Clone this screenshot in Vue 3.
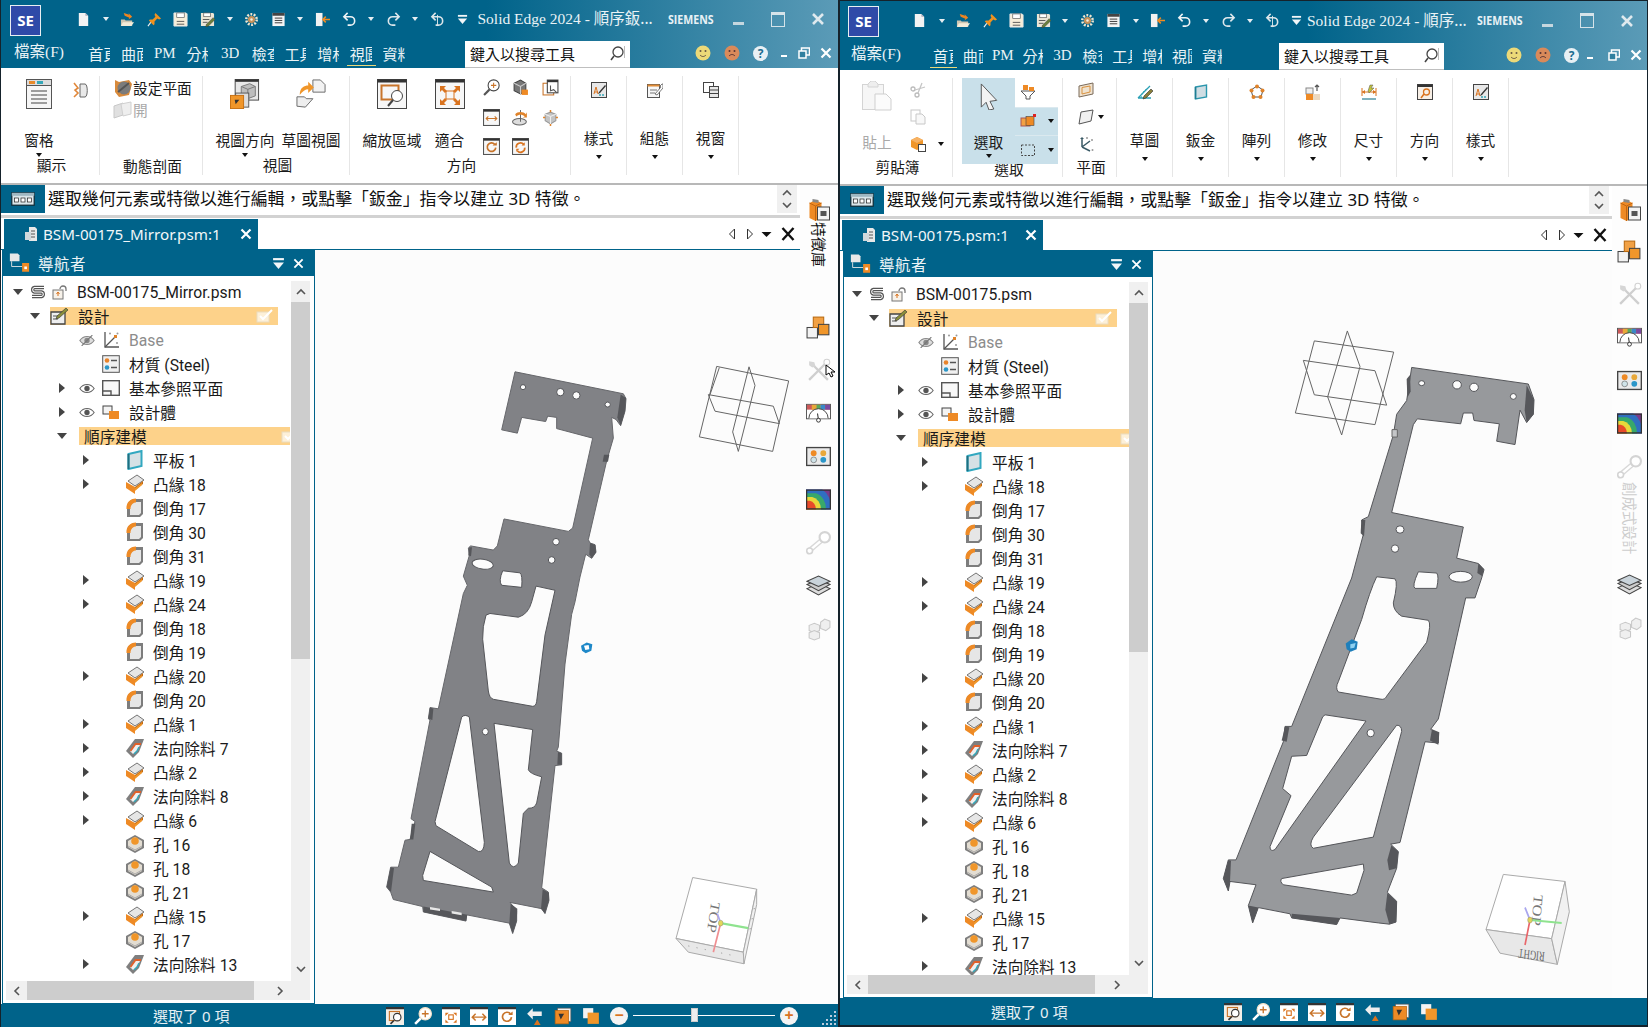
<template>
  <div class="app">
    <!-- icon sprite -->
    <svg class="sprite" aria-hidden="true">
      <symbol id="q-new" viewBox="0 0 16 16"><path d="M3 1h7l3 3v11H3z" fill="#f3f3f3"/><path d="M10 1v3h3z" fill="#aab"/></symbol>
      <symbol id="q-open" viewBox="0 0 16 16"><path d="M1 8h4l1 1h7v6H1z" fill="#cfc6b2"/><path d="M1 15l2-4h12l-3 4z" fill="#f3ecd9"/><path d="M4 1l6 2-1-2 4 4-4 3 1-2-5-2z" fill="#ee8420"/></symbol>
      <symbol id="q-pin" viewBox="0 0 16 16"><path d="M9 1l6 6-2 1-2-1-3 3v3l-1 1-5-5 1-1h3l3-3-1-2z" fill="#f0921f"/><path d="M4 11l-3 4" stroke="#f3f3f3" stroke-width="1.2"/></symbol>
      <symbol id="q-save" viewBox="0 0 16 16"><path d="M1 1h13l1 1v13H1z" fill="#f7eed9" stroke="#e8e8e8"/><rect x="4" y="1" width="8" height="5" fill="#fff" stroke="#555" stroke-width=".7"/><path d="M4 10h8M4 13h8" stroke="#555"/></symbol>
      <symbol id="q-saveas" viewBox="0 0 16 16"><path d="M1 1h13l1 1v13H1z" fill="#ece6d6"/><rect x="4" y="1" width="7" height="4" fill="#fff" stroke="#555" stroke-width=".7"/><path d="M3 8h7M3 11h5" stroke="#555"/><path d="M14 6l2 2-7 7-3 1 1-3z" fill="#6a7f3a" stroke="#333" stroke-width=".5"/></symbol>
      <symbol id="q-gear" viewBox="0 0 16 16"><circle cx="8" cy="8" r="5.6" fill="none" stroke="#f0e6d0" stroke-width="2.6" stroke-dasharray="2 1.5"/><circle cx="8" cy="8" r="3.8" fill="#c8925a"/><circle cx="8" cy="8" r="1.3" fill="#f7efe0"/></symbol>
      <symbol id="q-list" viewBox="0 0 16 16"><rect x="1.5" y="1" width="13" height="14" fill="#f4f4f4"/><rect x="1.5" y="1" width="13" height="3" fill="#444"/><path d="M4 6.5h8M4 9h8M4 11.5h8" stroke="#333"/></symbol>
      <symbol id="q-exit" viewBox="0 0 16 16"><rect x="1" y="1" width="7" height="14" fill="#f2f2f2"/><path d="M16 8H9M11.5 5L8.500 8l3 3" fill="none" stroke="#ef8b22" stroke-width="1.7"/></symbol>
      <symbol id="q-undo" viewBox="0 0 16 16"><path d="M6 1L2 5l4 4M2 5h7a4.500 4.500 0 0 1 0 9H6" fill="none" stroke="#eef3f5" stroke-width="1.7"/></symbol>
      <symbol id="q-redo" viewBox="0 0 16 16"><path d="M10 1l4 4-4 4M14 5H7a4.500 4.500 0 0 0 0 9h3" fill="none" stroke="#dde7ec" stroke-width="1.700"/></symbol>
      <symbol id="q-redo2" viewBox="0 0 16 16"><path d="M6 1L2 5l4 4M2 5h7a4.500 4.500 0 0 1 0 9H6" fill="none" stroke="#dce5e9" stroke-width="1.7"/><path d="M8 3v12" stroke="#dce5e9"/></symbol>
      <symbol id="q-drop" viewBox="0 0 12 12"><rect x="1" y="1" width="10" height="2" fill="#f2f6f8"/><path d="M1 5h10L6 11z" fill="#f2f6f8"/></symbol>

      <symbol id="r-pane" viewBox="0 0 26 30"><rect x=".5" y=".5" width="25" height="29" fill="#f6f6f6" stroke="#555"/><rect x=".5" y=".5" width="25" height="6" fill="#dcdcdc" stroke="#555"/><rect x="3" y="2" width="6" height="3" fill="#e88a2a"/><rect x="11" y="2" width="6" height="3" fill="#35a7b8"/><path d="M5 12h16M5 16h16M5 20h16M5 24h16" stroke="#444"/></symbol>
      <symbol id="r-sect" viewBox="0 0 16 16"><path d="M7 2v13h5c3 0 3-13 0-13z" fill="#e9e9e9" stroke="#666"/><path d="M1 1l4 5-3 2 3 3-4 4" fill="none" stroke="#e0873a" stroke-width="1.600"/></symbol>
      <symbol id="r-setplane" viewBox="0 0 20 20"><path d="M2 2l4 2 10-2 3 4-3 11-10 2-4-5z" fill="#d88a3c"/><circle cx="11" cy="10" r="6.500" fill="#7b7b7b"/><path d="M5 14L16 5" stroke="#555" stroke-width="2"/></symbol>
      <symbol id="r-openplane" viewBox="0 0 20 20"><path d="M1 6l9-3v12l-9 3z" fill="#e0e0e0" stroke="#c8c8c8"/><path d="M8 4l10-2v12l-8 2z" fill="#eee" stroke="#d0d0d0"/></symbol>
      <symbol id="r-orient" viewBox="0 0 32 32"><rect x="5.500" y=".5" width="25" height="22" fill="#e8e8e8" stroke="#444"/><rect x="5.500" y=".5" width="25" height="2.500" fill="#333"/><path d="M12 8l9-3 6 3v10l-8 3-7-3z" fill="#bdbdbd" stroke="#777"/><path d="M12 8l7 3v10M19 11l8-3" fill="none" stroke="#777"/><rect x="6" y="15" width="14" height="15" fill="#ddd" stroke="#555"/><rect x=".5" y="17.500" width="14" height="14" fill="#f0962a" stroke="#c76f10"/><path d="M5 22h5l-4 5z" fill="#333"/></symbol>
      <symbol id="r-sketchview" viewBox="0 0 32 32"><path d="M18 1h8l5 5v8H18z" fill="#f2f2f2" stroke="#666"/><path d="M1 19h8l2 2h7l-8 9-9-1z" fill="#eee" stroke="#666"/><path d="M4 17c0-8 5-10 9-10V3l6 6-6 6v-4c-3 0-6 2-9 6z" fill="#f0962a"/></symbol>
      <symbol id="r-zoomarea" viewBox="0 0 30 30"><rect x=".5" y=".5" width="29" height="29" fill="#f7f7f7" stroke="#444"/><rect x=".5" y=".5" width="29" height="3" fill="#333"/><rect x="4.500" y="6.500" width="17" height="14" fill="none" stroke="#c8742a" stroke-width="2"/><circle cx="20" cy="17" r="5.500" fill="#fff" stroke="#444"/><path d="M16 21l-5 6" stroke="#444" stroke-width="2"/></symbol>
      <symbol id="r-fit" viewBox="0 0 30 30"><rect x=".5" y=".5" width="29" height="29" fill="#f7f7f7" stroke="#444"/><rect x=".5" y=".5" width="29" height="3" fill="#333"/><rect x="11" y="12" width="8" height="8" fill="none" stroke="#d9731f"/><path d="M5 7h6L9 9l3 3-2 2-3-3-2 2zM25 7h-6l2 2-3 3 2 2 3-3 2 2zM5 26h6l-2-2 3-3-2-2-3 3-2-2zM25 26h-6l2-2-3-3 2-2 3 3 2-2z" fill="#d9731f"/></symbol>
      <symbol id="s-zoomin" viewBox="0 0 16 16"><circle cx="10" cy="6" r="5.200" fill="#fff" stroke="#444"/><path d="M10 3.500v5M7.500 6h5" stroke="#c8742a"/><path d="M6 10l-5 5" stroke="#555" stroke-width="2"/></symbol>
      <symbol id="s-cubeo" viewBox="0 0 16 16"><path d="M2 4l6-3 5 3v7l-5 3-6-3z" fill="#777" stroke="#444"/><path d="M2 4l6 3 5-3M8 7v7" stroke="#ccc" fill="none"/><rect x="9" y="10" width="6" height="5" fill="#ee8a25"/></symbol>
      <symbol id="s-sheet" viewBox="0 0 16 16"><rect x="1" y="4" width="10" height="11" fill="#fff" stroke="#c8742a"/><rect x="5" y="1" width="10" height="12" fill="#fff" stroke="#444"/><rect x="5" y="1" width="10" height="2" fill="#333"/><path d="M8 6v5l3-1 3 3" fill="none" stroke="#555"/></symbol>
      <symbol id="s-width" viewBox="0 0 16 16"><rect x=".5" y=".5" width="15" height="15" fill="#f7f7f7" stroke="#555"/><rect x=".5" y=".5" width="15" height="2" fill="#333"/><path d="M3 9h10M5 7L3 9l2 2M11 7l2 2-2 2" fill="none" stroke="#c8742a"/></symbol>
      <symbol id="s-rotdisc" viewBox="0 0 16 16"><ellipse cx="7" cy="12" rx="6.500" ry="3" fill="#ddd" stroke="#666"/><path d="M8 1v11" stroke="#666"/><path d="M3 5c2-3 8-3 10 0l1-2v5h-4l2-1c-2-2-6-2-8 0z" fill="#e0832a"/></symbol>
      <symbol id="s-cubear" viewBox="0 0 16 16"><path d="M3 5l5-2 5 2v6l-5 3-5-3z" fill="#c4c4c4" stroke="#999"/><path d="M3 5l5 2 5-2M8 7v7" stroke="#eee" fill="none"/><path d="M8 3V1M8 14v2M1 8h2M13 8h2" stroke="#e0832a" stroke-width="1.400"/></symbol>
      <symbol id="s-rot" viewBox="0 0 16 16"><rect x=".5" y=".5" width="15" height="15" fill="#f7f7f7" stroke="#555"/><rect x=".5" y=".5" width="15" height="2" fill="#333"/><path d="M11 6a4 4 0 1 0 1 3" fill="none" stroke="#c8742a" stroke-width="1.600"/><path d="M9 7h4V4z" fill="#c8742a"/></symbol>
      <symbol id="s-refresh" viewBox="0 0 16 16"><rect x=".5" y=".5" width="15" height="15" fill="#f7f7f7" stroke="#555"/><rect x=".5" y=".5" width="15" height="2" fill="#333"/><path d="M4 9a4 4 0 0 1 7-3M12 9a4 4 0 0 1-7 3" fill="none" stroke="#d9731f" stroke-width="1.600"/><path d="M9 7h3V4zM7 10H4v3z" fill="#d9731f"/></symbol>
      <symbol id="r-style" viewBox="0 0 16 16"><rect x=".5" y=".5" width="15" height="15" fill="#e8e8e8" stroke="#444"/><path d="M3 12l2-7 2 7M3.500 10h3" fill="none" stroke="#d9731f"/><path d="M14 3l-6 7-1 2 2-1 6-7z" fill="#333"/><path d="M8 13h6" stroke="#35a7b8" stroke-width="1.500" stroke-dasharray="2 1"/></symbol>
      <symbol id="r-config" viewBox="0 0 16 16"><rect x=".5" y="2.500" width="12" height="13" fill="#f7f7f7" stroke="#555"/><rect x=".5" y="2.500" width="12" height="2" fill="#e08b36"/><path d="M3 8h7M3 11h5" stroke="#777"/><path d="M15 2l-2 2 1 1-6 7 2 1 6-7 0-4z" fill="#fff" stroke="#444" stroke-width=".7"/></symbol>
      <symbol id="r-window" viewBox="0 0 16 16"><rect x=".5" y=".5" width="10" height="10" fill="#fff" stroke="#444"/><rect x="6.500" y="4.500" width="9" height="11" fill="#e8e8e8" stroke="#444"/><path d="M7 8h8M7 11.500h8" stroke="#444"/></symbol>
      <symbol id="r-paste" viewBox="0 0 30 30"><rect x=".5" y="3.500" width="21" height="25" fill="#f6f6f6" stroke="#d4d4d4"/><path d="M6 3l3-3h4l3 3v3H6z" fill="#eee" stroke="#d4d4d4"/><path d="M13 13h11l5 5v11H13z" fill="#fbfbfb" stroke="#cfcfcf"/></symbol>
      <symbol id="s-scissor" viewBox="0 0 16 16"><circle cx="3" cy="7" r="2" fill="none" stroke="#bbb" stroke-width="1.300"/><circle cx="7" cy="13" r="2" fill="none" stroke="#bbb" stroke-width="1.300"/><path d="M5 8l10-3M8 11l4-10" stroke="#c6c6c6" stroke-width="1.300"/></symbol>
      <symbol id="s-copy" viewBox="0 0 16 16"><rect x="1" y="1" width="9" height="11" fill="#fff" stroke="#c8c8c8"/><path d="M6 5h6l3 3v7H6z" fill="#f8f8f8" stroke="#c8c8c8"/></symbol>
      <symbol id="s-pastecube" viewBox="0 0 16 16"><path d="M1 4l6-3 6 3v7l-6 3-6-3z" fill="#f0962a"/><path d="M1 4l6 3 6-3-6-3z" fill="#f7b264"/><rect x="8.500" y="8.500" width="7" height="7" fill="#fff" stroke="#444"/></symbol>
      <symbol id="s-arrow" viewBox="0 0 20 28"><path d="M2 1l16 17-7 1 4 8-5 1-3-8-5 5z" fill="#f3f3f3" stroke="#555"/></symbol>
      <symbol id="s-funnel" viewBox="0 0 16 16"><path d="M1 7h14l-5 5v3H6v-3z" fill="#fff" stroke="#555"/><rect x="3" y="1" width="5" height="5" fill="#ee8a25"/><rect x="9" y="3" width="5" height="4" fill="#ee8a25"/></symbol>
      <symbol id="s-faces" viewBox="0 0 16 16"><rect x="1" y="5" width="9" height="8" fill="#f2a144" stroke="#a55"/><rect x="6" y="3.500" width="8" height="9" fill="#ee8a25" stroke="#444" stroke-width=".6"/><rect x="13" y="1" width="3" height="3" fill="#d22"/></symbol>
      <symbol id="s-dashed" viewBox="0 0 16 16"><rect x="1.500" y="3" width="13" height="10.500" fill="none" stroke="#444" stroke-dasharray="2 1.500"/></symbol>
      <symbol id="s-plane1" viewBox="0 0 16 16"><path d="M1 4l14-3v11L1 15z" fill="#efe2cf" stroke="#7a6a5a"/><path d="M4 5.500l8-1.500v6l-8 2z" fill="none" stroke="#d8913f"/></symbol>
      <symbol id="s-plane2" viewBox="0 0 16 16"><path d="M3 3l12-2-2 11-12 3z" fill="#f0f0f0" stroke="#555"/></symbol>
      <symbol id="s-triad" viewBox="0 0 16 16"><path d="M4 11V2M4 11l8-6M4 11l8 4" stroke="#3a5a66" stroke-width="1.500" fill="none"/><path d="M2 3l2-2 2 2z" fill="#3a5a66"/><g fill="#999"><circle cx="9" cy="2" r="1"/><circle cx="14" cy="4" r="1"/><circle cx="14.500" cy="14" r="1"/></g></symbol>
      <symbol id="s-sketch" viewBox="0 0 16 16"><path d="M1 14L13 2M1 14h13" stroke="#2aa0b5" stroke-width="1.300" fill="none"/><path d="M4 14a10 10 0 0 1 6-9" stroke="#2aa0b5" fill="none" stroke-dasharray="2 1"/><path d="M14 5l2 2-7 7-3 1 1-3z" fill="#8a7f3a" stroke="#333" stroke-width=".6"/></symbol>
      <symbol id="s-plate" viewBox="0 0 16 16"><path d="M2.500 3l11-2v12l-11 2z" fill="#cfdde3" stroke="#2b96ad" stroke-width="1.400"/><path d="M2.500 3v12" stroke="#1e7e93" stroke-width="1.600"/></symbol>
      <symbol id="s-pattern" viewBox="0 0 16 16"><path d="M8 2l6 4-2 7H4L2 6z" fill="none" stroke="#555"/><g fill="#e0832a"><circle cx="8" cy="2.500" r="2"/><circle cx="13.500" cy="6.500" r="2"/><circle cx="11.500" cy="13" r="2"/><circle cx="4.500" cy="13" r="2"/><circle cx="2.500" cy="6.500" r="2"/></g></symbol>
      <symbol id="s-modify" viewBox="0 0 16 16"><rect x="1" y="4" width="7" height="6" fill="#eee" stroke="#888"/><rect x="1" y="10" width="7" height="6" fill="#ee8a25"/><rect x="8" y="10" width="7" height="6" fill="#ecd9c0"/><path d="M12 7V1M10 3l2-2 2 2" fill="none" stroke="#555" stroke-width="1.200"/></symbol>
      <symbol id="s-dim" viewBox="0 0 16 16"><path d="M1 4v8M15 4v8M1 8h14" stroke="#d9731f" fill="none"/><path d="M1 8l3-2v4zM15 8l-3-2v4z" fill="#d9731f"/><path d="M7 7l2-6 3 0-2 3h3l-5 5z" fill="#c2c23a" stroke="#555" stroke-width=".5"/><path d="M1 15h14" stroke="#2b7e93" stroke-width="1.200"/></symbol>
      <symbol id="s-orient" viewBox="0 0 16 16"><rect x=".5" y=".5" width="15" height="15" fill="#f7efe6" stroke="#444"/><rect x=".5" y=".5" width="15" height="2.500" fill="#333"/><circle cx="9.500" cy="8" r="3" fill="none" stroke="#d9731f" stroke-width="1.300"/><path d="M7 10l-3 4" stroke="#d9731f" stroke-width="1.500"/></symbol>

      <symbol id="d-feature" viewBox="0 0 24 24"><path d="M3 5l6-3 6 3v15l-6 3-6-3z" fill="#ee8a25"/><path d="M3 5l6 3 6-3M9 8v15" fill="none" stroke="#c2650f"/><path d="M6 1l6 1v3l-6-1z" fill="#888"/><rect x="11" y="9" width="12" height="13" fill="#f4f4f4" stroke="#444"/><rect x="14" y="13" width="6" height="5" fill="#555"/></symbol>
      <symbol id="d-asm" viewBox="0 0 24 24"><rect x="1" y="12" width="10" height="10" fill="#f3f3f3" stroke="#444"/><rect x="7" y="2" width="10" height="10" fill="#f2a144" stroke="#b8690f"/><rect x="12" y="9" width="10" height="10" fill="#f0962a" stroke="#444"/></symbol>
      <symbol id="d-tool" viewBox="0 0 24 24"><g fill="none" stroke="#cfcfcf" stroke-width="2.200"><path d="M3 21L18 6"/><path d="M6 6l15 15"/></g><path d="M3 3l5 1 1 4-3 1-3-2z" fill="#d6d6d6"/><circle cx="20" cy="4" r="2.800" fill="#fff" stroke="#d2d2d2"/></symbol>
      <symbol id="d-gauge" viewBox="0 0 26 20"><rect x=".5" y=".5" width="25" height="15" fill="#fff" stroke="#555"/><path d="M1 6V1h24v5z" fill="#cc5a5a"/><path d="M6 6V1h5v5zM11 6V1h5v5z" fill="#e8a83a"/><path d="M11 6V1h4v5z" fill="#5aa85a"/><path d="M15 6V1h5v5z" fill="#3a89c8"/><path d="M20 6V1h5v5z" fill="#7a4aa0"/><path d="M3 15A10 10 0 0 1 23 15" fill="#fff" stroke="#444"/><path d="M13 17l-1-7" stroke="#222"/><circle cx="13" cy="17" r="2" fill="#fff" stroke="#333"/></symbol>
      <symbol id="d-grid" viewBox="0 0 26 20"><rect x=".7" y=".7" width="24.600" height="18.600" fill="#eaeaea" stroke="#444" stroke-width="1.400"/><circle cx="8" cy="6.500" r="3" fill="#ee8a25"/><circle cx="18" cy="6.500" r="3" fill="#e8a83a"/><circle cx="8" cy="13.500" r="3" fill="#cfe3e8" stroke="#555" stroke-width=".6"/><circle cx="18" cy="13.500" r="3" fill="#2b96c8"/></symbol>
      <symbol id="d-rainbow" viewBox="0 0 20 16"><rect width="20" height="16" fill="#7a3a8a"/><path d="M0 0h13a13 16 0 0 1 7 16H0z" fill="#2f6fc0"/><path d="M0 3h8a11 13 0 0 1 8 13H0z" fill="#38a86a"/><path d="M0 6h5a9 10 0 0 1 7 10H0z" fill="#e8d83a"/><path d="M0 9h3a6 7 0 0 1 5 7H0z" fill="#e84a2a"/><rect x=".5" y=".5" width="19" height="15" fill="none" stroke="#333"/></symbol>
      <symbol id="d-key" viewBox="0 0 24 24"><path d="M3 20L16 9" stroke="#d8d8d8" stroke-width="5"/><path d="M3 20L16 9" stroke="#fff" stroke-width="2.400"/><circle cx="18" cy="7" r="5" fill="#fff" stroke="#d4d4d4" stroke-width="2"/><circle cx="3.500" cy="20" r="2.800" fill="#fff" stroke="#d4d4d4" stroke-width="1.500"/></symbol>
      <symbol id="d-layers" viewBox="0 0 24 20"><path d="M1 13l11-5 11 5-11 6z" fill="#ddd" stroke="#444"/><path d="M1 9l11-5 11 5-11 6z" fill="#ccc" stroke="#444"/><path d="M1 6l11-5 11 5-11 5z" fill="#c9d3da" stroke="#444"/></symbol>
      <symbol id="d-hex" viewBox="0 0 24 24"><g fill="#efefef" stroke="#c8c8c8"><path d="M14 6l4-3 5 2v6l-4 3-5-2z"/><path d="M3 9l5-2 5 2v5l-5 2-5-2z"/><path d="M3 16l5-2 5 2v5l-5 2-5-2z"/></g></symbol>

      <symbol id="t-flange" viewBox="0 0 20 20"><path d="M3 7l9-6 7 5-9 6z" fill="#e6e6e6" stroke="#666" stroke-width=".9"/><path d="M1 8l9 5v7L1 14z" fill="#ee8a25"/><path d="M10 13l8-6v3l-8 6z" fill="#c46a10"/><path d="M10 14l7-5v2l-7 6z" fill="#f0962a"/></symbol>
      <symbol id="t-round" viewBox="0 0 20 20"><path d="M2 19V9c0-5 4-8 9-8h7v15l-3 3z" fill="#7d7d7d"/><path d="M5 17V9c0-3 3-5 6-5h5v11l-2 2z" fill="#e6e6e6"/><path d="M1.500 11C1 5 5 .5 11 .5v4C8 4.500 5.500 7 5.500 11z" fill="#ee8a25"/></symbol>
      <symbol id="t-cut" viewBox="0 0 20 20"><path d="M1 13L10 1h9l-5 13-6 6z" fill="#7f7f7f"/><path d="M5 13l6-8h5l-4 8-4 3z" fill="#efefef"/><path d="M5.500 13L10.500 6H16" fill="none" stroke="#e0602a" stroke-width="1.800"/><path d="M9 16l3-3 2-4" fill="none" stroke="#35a7b8" stroke-width="1.500"/></symbol>
      <symbol id="t-hole" viewBox="0 0 20 20"><path d="M10 1l9 5v8l-9 5-9-5V6z" fill="#7f7f7f"/><path d="M10 3l7 4v6l-7 4-7-4V7z" fill="#e3ddd2"/><circle cx="10" cy="7" r="3.800" fill="#f0962a"/><path d="M3 12l7 4 7-4" stroke="#aaa" fill="none"/></symbol>
      <symbol id="t-plate" viewBox="0 0 20 20"><path d="M3.500 4l13-3v15l-13 3z" fill="#d6e1e5" stroke="#32a8c0" stroke-width="2"/><path d="M3.500 4v15" stroke="#1f6f80" stroke-width="2"/></symbol>
      <symbol id="t-eye" viewBox="0 0 18 12"><path d="M1 6c4-6 12-6 16 0-4 6-12 6-16 0z" fill="#fff" stroke="#666" stroke-width="1.300"/><circle cx="9" cy="6" r="3" fill="#555"/></symbol>
      <symbol id="t-eyeoff" viewBox="0 0 18 12"><path d="M1 6c4-6 12-6 16 0-4 6-12 6-16 0z" fill="#ddd" stroke="#888" stroke-width="1.300"/><circle cx="9" cy="6" r="3" fill="#888"/><path d="M3 12L15 0" stroke="#777" stroke-width="1.300"/></symbol>
      <symbol id="t-s" viewBox="0 0 16 16"><path d="M14 3.500H4.500a2.300 2.300 0 0 0 0 4.500h7a2.300 2.300 0 0 1 0 4.500H2" fill="none" stroke="#555" stroke-width="3.400"/><path d="M14 3.500H4.500a2.300 2.300 0 0 0 0 4.500h7a2.300 2.300 0 0 1 0 4.500H2" fill="none" stroke="#fff" stroke-width="1.100"/></symbol>
      <symbol id="t-lock" viewBox="0 0 16 16"><rect x="1" y="6" width="10" height="9" fill="#f7f2ea" stroke="#777"/><path d="M8 5a3 3 0 0 1 6 0v2" fill="none" stroke="#777" stroke-width="1.300"/><path d="M6 8v4M4.500 10L6 8l1.500 2" fill="none" stroke="#d9731f"/></symbol>
      <symbol id="t-design" viewBox="0 0 18 18"><path d="M1 5h14v12H1z" fill="#eee" stroke="#444" stroke-width="1.300"/><path d="M3 9h7M3 12h5" stroke="#555"/><path d="M16 1l2 2-9 8-3 1 1-3z" fill="#8a8f3a" stroke="#333" stroke-width=".6"/></symbol>
      <symbol id="t-check" viewBox="0 0 18 14"><rect x="1" y="3" width="12" height="10" fill="#fdf0d8" stroke="#eadcc0"/><path d="M4 7l3 3 9-9" fill="none" stroke="#fff" stroke-width="2"/></symbol>
      <symbol id="t-base" viewBox="0 0 18 18"><path d="M3 1v15h14" fill="none" stroke="#555" stroke-width="1.300"/><path d="M3 16L13 6" stroke="#555" stroke-width="1.300"/><rect x="12" y="4" width="3" height="3" fill="#e0832a"/><g fill="#999"><circle cx="8" cy="2.500" r="1"/><circle cx="15.500" cy="2.500" r="1"/><circle cx="15" cy="12" r="1"/></g></symbol>
      <symbol id="t-mat" viewBox="0 0 18 18"><rect x=".7" y=".7" width="16.600" height="16.600" fill="#f0f0f0" stroke="#555"/><circle cx="5" cy="5.500" r="2.300" fill="#e8832a"/><circle cx="5" cy="12.500" r="2.300" fill="#2b96c8"/><path d="M9 5.500h6M9 12.500h6" stroke="#555" stroke-width="1.300"/></symbol>
      <symbol id="t-refplane" viewBox="0 0 18 18"><rect x=".7" y="1.700" width="16.600" height="14.600" fill="#f8f8f8" stroke="#555" stroke-width="1.400"/><path d="M1 12h8V17" fill="none" stroke="#555" stroke-width="1.400"/></symbol>
      <symbol id="t-body" viewBox="0 0 18 18"><rect x="1" y="3" width="9" height="8" fill="#f3f3f3" stroke="#444"/><rect x="7" y="8" width="10" height="8" fill="#ee8a25"/></symbol>

      <symbol id="n-nav" viewBox="0 0 24 24"><path d="M1 1h9l2 2v7H1z" fill="#e8e8e8"/><path d="M3 10v6h12" fill="none" stroke="#e8e8e8"/><rect x="15" y="12" width="8" height="10" fill="#ee8a25"/><rect x="17.500" y="16" width="3" height="3" fill="#fff"/></symbol>
      <symbol id="n-doc" viewBox="0 0 14 16"><path d="M5 1h6l2 2v12H5z" fill="#e8e8e8"/><rect x="1" y="6" width="6" height="8" fill="#d0d8dc"/><path d="M7 5h4M7 8h4M7 11h4" stroke="#555"/></symbol>
      <symbol id="p-card" viewBox="0 0 24 14"><rect x=".8" y=".8" width="22.400" height="12.400" fill="#dbe6ea" stroke="#0b2733" stroke-width="1.200"/><rect x=".8" y=".8" width="22.400" height="3" fill="#9fb7c1"/><rect x="3.500" y="6" width="4" height="4" fill="#fff" stroke="#222" stroke-width=".7"/><rect x="10" y="6" width="4" height="4" fill="#fff" stroke="#222" stroke-width=".7"/><rect x="16.500" y="6" width="4" height="4" fill="#fff" stroke="#222" stroke-width=".7"/></symbol>
      <symbol id="c-up" viewBox="0 0 12 12"><path d="M2 8l4-4 4 4" fill="none" stroke="#555" stroke-width="1.600"/></symbol>
      <symbol id="c-down" viewBox="0 0 12 12"><path d="M2 4l4 4 4-4" fill="none" stroke="#555" stroke-width="1.600"/></symbol>
      <symbol id="c-left" viewBox="0 0 12 12"><path d="M8 2L4 6l4 4" fill="none" stroke="#555" stroke-width="1.600"/></symbol>
      <symbol id="c-right" viewBox="0 0 12 12"><path d="M4 2l4 4-4 4" fill="none" stroke="#555" stroke-width="1.600"/></symbol>
      <symbol id="b-zoomarea" viewBox="0 0 16 16"><rect x="0" y="0" width="16" height="16" fill="#f3efe8"/><rect x="0" y="0" width="16" height="2" fill="#333"/><rect x="3" y="4" width="9" height="8" fill="none" stroke="#c8742a"/><circle cx="10" cy="9" r="3.300" fill="#fff" stroke="#333"/><path d="M7 12l-3 3" stroke="#333" stroke-width="1.500"/></symbol>
      <symbol id="b-zoomin" viewBox="0 0 16 16"><circle cx="10" cy="6" r="5.500" fill="#fff" stroke="#f6e2c8"/><path d="M10 3v6M7 6h6" stroke="#c8742a" stroke-width="1.200"/><path d="M6 10l-5 5" stroke="#fff" stroke-width="2.200"/></symbol>
      <symbol id="b-fit" viewBox="0 0 16 16"><rect width="16" height="16" fill="#fff"/><rect width="16" height="2" fill="#333"/><path d="M3 5h3L3 8zM13 5h-3l3 3zM3 14h3l-3-3zM13 14h-3l3-3z" fill="#d9731f"/><rect x="6" y="7" width="4" height="4" fill="none" stroke="#d9731f"/></symbol>
      <symbol id="b-width" viewBox="0 0 16 16"><rect width="16" height="16" fill="#fff"/><rect width="16" height="2" fill="#333"/><path d="M2 9h12M5 6L2 9l3 3M11 6l3 3-3 3" fill="none" stroke="#c8742a" stroke-width="1.300"/></symbol>
      <symbol id="b-rot" viewBox="0 0 16 16"><rect width="16" height="16" fill="#fff"/><rect width="16" height="2" fill="#333"/><path d="M11 6a4 4 0 1 0 1 3" fill="none" stroke="#c8742a" stroke-width="1.500"/><path d="M9 7h4V4z" fill="#c8742a"/></symbol>
      <symbol id="b-back" viewBox="0 0 16 16"><path d="M6 1L1 6l5 5V8h8V4H6z" fill="#eee"/><path d="M10 11l3 5H7z" fill="#d9731f"/></symbol>
      <symbol id="b-orient" viewBox="0 0 16 16"><rect x="3" y="1" width="12" height="12" fill="#f3f3f3" stroke="#555" stroke-width=".6"/><rect x="1" y="3" width="12" height="12" fill="#ee8a25" stroke="#b5630f" stroke-width=".6"/><path d="M4 6h5l-3 5z" fill="#333"/></symbol>
      <symbol id="b-layers" viewBox="0 0 16 16"><rect x="1" y="1" width="9" height="9" fill="#f3f3f3"/><rect x="5" y="5" width="10" height="10" fill="#f0962a"/></symbol>
    </svg>

    <div v-for="w in windows" :key="w.id" class="win" :class="'win-' + w.id">
      <!-- title bar -->
      <div class="titlebar">
        <div class="se-logo">SE</div>
        <div class="qat">
          <template v-for="(q, i) in qat" :key="i">
            <span v-if="q === 'caret'" class="qcaret"></span>
            <svg v-else class="i15"><use :href="'#' + q" /></svg>
          </template>
          <svg class="qdrop"><use href="#q-drop" /></svg>
        </div>
        <div class="app-title"><span class="serif">Solid Edge 2024 - </span>{{ w.title }}</div>
        <div class="siemens">SIEMENS</div>
        <div class="winbtns">
          <span class="wb-min"></span>
          <span class="wb-max"></span>
          <svg class="wb-close" viewBox="0 0 14 14"><path d="M2 2l10 10M12 2L2 12" stroke="#dfe9ee" stroke-width="2.600" /></svg>
        </div>
      </div>

      <!-- ribbon tabs -->
      <div class="tabbar">
        <div class="file-tab">檔案(F)</div>
        <div class="tabs">
          <div v-for="(t, i) in tabs" :key="i" class="tab" :class="{ active: i === w.activeTab }">
            <span>{{ t }}</span>
          </div>
        </div>
        <div class="search">
          <span>鍵入以搜尋工具</span>
          <svg class="search-ic" viewBox="0 0 16 16"><circle cx="9" cy="7" r="5" fill="none" stroke="#444" stroke-width="1.300" /><path d="M5 11l-3 4" stroke="#444" stroke-width="1.500" /><path d="M15.500 1v12" stroke="#bbb" /></svg>
        </div>
        <div class="tabicons">
          <svg class="face" viewBox="0 0 16 16"><circle cx="8" cy="8" r="7.500" fill="#ecd978" /><circle cx="5.500" cy="6" r="1" fill="#654" /><circle cx="10.500" cy="6" r="1" fill="#654" /><path d="M5 10c2 2 4 2 6 0" fill="none" stroke="#654" /></svg>
          <svg class="face" viewBox="0 0 16 16"><circle cx="8" cy="8" r="7.500" fill="#d98a5a" /><circle cx="5.500" cy="6" r="1" fill="#533" /><circle cx="10.500" cy="6" r="1" fill="#533" /><path d="M5 11c2-2 4-2 6 0" fill="none" stroke="#533" /></svg>
          <span class="help">?</span>
          <span class="mini-min"></span>
          <svg class="mini-rest" viewBox="0 0 12 12"><rect x="3.500" y="1" width="8" height="7" fill="none" stroke="#fff" stroke-width="1.500" /><rect x="1" y="4" width="7" height="7" fill="#2f7f9f" stroke="#fff" stroke-width="1.500" /></svg>
          <svg class="mini-x" viewBox="0 0 12 12"><path d="M1.500 1.500l9 9M10.500 1.500l-9 9" stroke="#fff" stroke-width="2.200" /></svg>
        </div>
      </div>

      <!-- ribbon: view tab -->
      <div v-if="w.id === 'a'" class="ribbon">
        <div class="rg g-show">
          <div class="rg-body">
            <div class="big w50"><svg class="pane-ic"><use href="#r-pane" /></svg><div class="big-label">窗格</div><span class="caret"></span></div>
            <svg class="i16 sect-ic"><use href="#r-sect" /></svg>
          </div>
          <div class="rg-label">顯示</div>
        </div>
        <div class="rg g-sect">
          <div class="rg-body column">
            <div class="textrow"><svg class="i20"><use href="#r-setplane" /></svg><span>設定平面</span></div>
            <div class="textrow off"><svg class="i20"><use href="#r-openplane" /></svg><span>開</span></div>
          </div>
          <div class="rg-label">動態剖面</div>
        </div>
        <div class="rg g-view">
          <div class="rg-body">
            <div class="big w66"><svg class="i30"><use href="#r-orient" /></svg><div class="big-label">視圖方向</div><span class="caret"></span></div>
            <div class="big w66"><svg class="i30"><use href="#r-sketchview" /></svg><div class="big-label">草圖視圖</div></div>
          </div>
          <div class="rg-label">視圖</div>
        </div>
        <div class="rg g-orient">
          <div class="rg-body">
            <div class="big w60"><svg class="i30"><use href="#r-zoomarea" /></svg><div class="big-label">縮放區域</div></div>
            <div class="big w55"><svg class="i30"><use href="#r-fit" /></svg><div class="big-label">適合</div></div>
            <div class="smallgrid">
              <svg v-for="s in orientIcons" :key="s" class="i17"><use :href="'#' + s" /></svg>
            </div>
          </div>
          <div class="rg-label">方向</div>
        </div>
        <div v-for="c in viewCollapsed" :key="c.label" class="rg g-col">
          <div class="cb"><svg class="i16"><use :href="'#' + c.icon" /></svg><div class="cb-label">{{ c.label }}</div><span class="caret"></span></div>
        </div>
      </div>

      <!-- ribbon: home tab -->
      <div v-else class="ribbon">
        <div class="rg g-clip">
          <div class="rg-body">
            <div class="big w50 off"><svg class="i30"><use href="#r-paste" /></svg><div class="big-label">貼上</div></div>
            <div class="smcol clip-col">
              <div class="smrow"><svg class="i16"><use href="#s-scissor" /></svg></div>
              <div class="smrow"><svg class="i16"><use href="#s-copy" /></svg></div>
              <div class="smrow"><svg class="i16"><use href="#s-pastecube" /></svg><span class="caret inline"></span></div>
            </div>
          </div>
          <div class="rg-label">剪貼簿</div>
        </div>
        <div class="rg g-select">
          <div class="rg-body">
            <div class="sel-big">
              <svg class="sel-arrow"><use href="#s-arrow" /></svg>
              <div class="big-label">選取</div>
              <span class="caret"></span>
            </div>
            <div class="sel-col">
              <div class="sel-row plain"><svg class="i16"><use href="#s-funnel" /></svg></div>
              <div class="sel-row"><svg class="i16"><use href="#s-faces" /></svg><span class="caret inline"></span></div>
              <div class="sel-row"><svg class="i16"><use href="#s-dashed" /></svg><span class="caret inline"></span></div>
            </div>
          </div>
          <div class="rg-label low">選取</div>
        </div>
        <div class="rg g-plane">
          <div class="rg-body">
            <div class="smcol plane-col">
              <div class="smrow"><svg class="i16"><use href="#s-plane1" /></svg></div>
              <div class="smrow"><svg class="i16"><use href="#s-plane2" /></svg><span class="caret inline near"></span></div>
              <div class="smrow"><svg class="i16"><use href="#s-triad" /></svg></div>
            </div>
          </div>
          <div class="rg-label">平面</div>
        </div>
        <div v-for="c in homeCollapsed" :key="c.label" class="rg g-col">
          <div class="cb"><svg class="i16"><use :href="'#' + c.icon" /></svg><div class="cb-label">{{ c.label }}</div><span class="caret"></span></div>
        </div>
      </div>

      <div class="work">
        <div class="col">
          <div class="prompt">
            <div class="prompt-ic"><svg class="card"><use href="#p-card" /></svg></div>
            <div class="prompt-text">選取幾何元素或特徵以進行編輯，或點擊「鈑金」指令以建立 3D 特徵。</div>
            <div class="prompt-scroll"><svg class="chev"><use href="#c-up" /></svg><svg class="chev"><use href="#c-down" /></svg></div>
          </div>
          <div class="strip"></div>

          <div class="docrow">
            <div class="doctab">
              <svg class="doc-ic"><use href="#n-doc" /></svg>
              <span>{{ w.doc }}:1</span>
              <svg class="doc-x" viewBox="0 0 12 12"><path d="M1.500 1.500l9 9M10.500 1.500l-9 9" stroke="#fff" stroke-width="2.200" /></svg>
            </div>
            <div class="docctl">
              <svg viewBox="0 0 10 14"><path d="M7 2L2 7l5 5z" fill="#fff" stroke="#333" /></svg>
              <svg viewBox="0 0 10 14"><path d="M3 2l5 5-5 5z" fill="#fff" stroke="#333" /></svg>
              <svg viewBox="0 0 10 14"><path d="M0 5h10L5 10z" fill="#111" /></svg>
              <svg class="big-x" viewBox="0 0 14 14"><path d="M1.500 1l11 12M12.500 1l-11 12" stroke="#111" stroke-width="2.400" /></svg>
            </div>
          </div>

          <div class="main">
            <div class="nav">
              <div class="nav-head">
                <svg class="nav-ic"><use href="#n-nav" /></svg>
                <span class="nav-title">導航者</span>
                <svg class="nav-drop"><use href="#q-drop" /></svg>
                <svg class="nav-x" viewBox="0 0 12 12"><path d="M1.500 1.500l9 9M10.500 1.500l-9 9" stroke="#fff" stroke-width="2" /></svg>
              </div>
              <div class="nav-mid">
                <div class="tree">
                  <div v-for="(r, i) in treeRows(w)" :key="i" class="row" :class="'lv' + r.lv">
                    <span class="tw" :class="r.tw"></span>
                    <svg v-if="r.s" class="i16 ms"><use href="#t-s" /></svg>
                    <svg v-if="r.s" class="i16 ms"><use href="#t-lock" /></svg>
                    <div v-if="r.hl" class="hl">
                      <svg v-if="r.icon" class="i18"><use :href="'#' + r.icon" /></svg>
                      <span class="lab">{{ r.label }}</span>
                      <svg class="hl-check"><use href="#t-check" /></svg>
                    </div>
                    <template v-else>
                      <svg v-if="r.eye" class="eye"><use :href="'#' + r.eye" /></svg>
                      <span v-else-if="r.lv === 2" class="eye"></span>
                      <svg v-if="r.icon" class="ticon"><use :href="'#' + r.icon" /></svg>
                      <span class="lab" :class="{ gray: r.gray }">{{ r.label }}</span>
                    </template>
                  </div>
                </div>
                <div class="vscroll">
                  <div class="sb-btn"><svg class="chev"><use href="#c-up" /></svg></div>
                  <div class="sb-thumb"></div>
                  <div class="sb-rest"><svg class="chev"><use href="#c-down" /></svg></div>
                </div>
              </div>
              <div class="hscroll">
                <div class="hbtn"><svg class="chev"><use href="#c-left" /></svg></div>
                <div class="h-thumb"></div>
                <div class="hbtn end"><svg class="chev"><use href="#c-right" /></svg></div>
              </div>
            </div>

            <div class="viewport">
              <!-- left window: mirrored part, drawn in crop coordinates -->
              <svg v-if="w.id === 'a'" class="scene" viewBox="0 0 1380 1568" preserveAspectRatio="none">
                <g class="wire">
                  <path d="M1010,42 L1226,77 L1178,247 L958,212 Z" />
                  <path d="M1107,43 L1125,88 L1075,247 L1058,200 Z" />
                  <path d="M985,110 L1180,138 L1198,180 L1005,150 Z" />
                  <path d="M1018,45 L990,110" />
                </g>
                <path class="part-a" d="M405,55 L730,108 L738,120 L735,150 L722,185 L708,170 L695,165 L700,215 L680,270 L625,460 L630,468 L645,472 L648,490 L635,505 L617,495 L600,550 L585,610 L575,640 L555,760 L535,960 L530,970 L545,975 L545,1003 L525,1005 L485,1300 L505,1310 L507,1330 L495,1362 L485,1350 L390,1335 L410,1355 L410,1380 L398,1410 L388,1385 L260,1365 L258,1380 L130,1358 L128,1345 L40,1328 L32,1310 L20,1298 L32,1250 L55,1250 L75,1185 L90,1183 L105,1140 L93,1133 L150,895 L145,892 L150,865 L175,868 L250,590 L262,570 L250,548 L268,498 L265,480 L272,475 L340,485 L352,475 L372,410 L565,440 L578,432 L638,215 L530,192 L530,165 L503,162 L497,175 L425,165 L412,203 L365,195 Z" />
                <g class="hole">
                  <ellipse cx="429" cy="92" rx="8" ry="6" />
                  <ellipse cx="541" cy="104" rx="11" ry="9" />
                  <ellipse cx="589" cy="112" rx="11" ry="9" />
                  <ellipse cx="683" cy="134" rx="8" ry="6" />
                  <ellipse cx="528" cy="465" rx="10" ry="8" />
                  <ellipse cx="515" cy="509" rx="10" ry="8" />
                  <ellipse cx="316" cy="923" rx="9" ry="8" />
                  <ellipse cx="308" cy="519" rx="32" ry="12" transform="rotate(6 308 519)" />
                  <path d="M368,535 L420,540 Q428,545 425,575 L365,570 Q355,560 368,535 Z" />
                  <path d="M468,572 L525,582 L495,690 L470,850 Q468,862 458,862 L340,845 Q328,842 325,825 L308,700 L310,670 L318,642 L330,638 L415,647 Q445,640 455,610 Z" />
                  <path d="M245,888 Q255,880 268,888 L313,1190 Q312,1215 295,1212 L168,1150 L165,1140 Z" />
                  <path d="M342,903 L458,918 L445,1015 Q450,1025 485,1032 L470,1095 Q465,1108 445,1108 L430,1120 L415,1240 Q400,1258 388,1240 Z" />
                  <path d="M150,1212 L335,1298 L340,1310 L130,1282 L128,1270 Z" />
                </g>
                <g class="flange-dark">
                  <path d="M722,110 L738,118 L735,150 L722,185 L712,165 Z" />
                  <path d="M630,468 L646,473 L648,490 L635,505 L628,495 Z" />
                  <path d="M534,972 L545,975 L545,1003 L532,1003 Z" />
                  <path d="M150,865 L160,868 L157,895 L145,892 Z" />
                  <path d="M95,1145 L106,1145 L100,1183 L90,1183 Z" />
                  <path d="M32,1250 L42,1252 L33,1310 L20,1298 Z" />
                  <path d="M130,1345 L262,1365 L258,1380 L130,1358 Z" />
                  <path d="M392,1338 L412,1350 L410,1380 L398,1410 L388,1385 Z" />
                  <path d="M488,1303 L507,1312 L507,1330 L495,1362 L483,1350 Z" />
                  <path d="M268,478 L276,478 L273,500 L265,498 Z" />
                  <path d="M672,255 L688,255 L684,272 L668,272 Z" />
                </g>
                <path class="bslot" d="M150,1352 L180,1356 L180,1350 L150,1346 Z M215,1362 L245,1366 L245,1360 L215,1356 Z" />
                <g transform="translate(620 720)">
                  <path d="M-17,-4 L0,-12 L17,-8 L14,8 L-3,14 L-14,8 Z" fill="#1e88c8" />
                  <path d="M-8,-4 L6,-6 L8,4 L-4,6 Z" fill="#fff" />
                </g>
                <!-- view cube -->
                <path class="cube-top" d="M938,1275 L1130,1303 L1090,1455 L888,1422 Z" />
                <path class="cube-front" d="M888,1422 L1090,1455 L1092,1483 L925,1455 Z" />
                <path class="cube-right" d="M1130,1303 L1130,1340 L1092,1483 L1090,1455 Z" />
                <text class="cube-text" transform="translate(994 1332) rotate(100) scale(1 1)">TOP</text>
                <path class="cube-dots" d="M925,1440 L1070,1465 M1110,1400 L1125,1340" />
                <path d="M1022,1385 L1000,1455" stroke="#ef8f92" stroke-width="5" />
                <path d="M1022,1385 L1105,1397" stroke="#8fe38f" stroke-width="5" />
                <path d="M1022,1385 L1012,1362" stroke="#a9a6ee" stroke-width="5" />
                <circle cx="1022" cy="1385" r="7" fill="#e4d65a" stroke="#777" />
              </svg>

              <!-- right window: original part -->
              <svg v-else class="scene" viewBox="0 0 1404 1568" preserveAspectRatio="none">
                <g class="wire">
                  <path d="M403,48 L641,75 L585,250 L346,222 Z" />
                  <path d="M502,24 L540,110 L485,275 L443,183 Z" />
                  <path d="M370,95 L585,120 L620,203 L403,178 Z" />
                </g>
                <path class="part-b" d="M695,112 L1045,152 L1062,190 L1060,225 L1040,245 L1020,215 L1005,298 L950,290 L958,248 L882,240 L878,222 L850,222 L842,248 L712,236 L700,250 L635,462 L850,497 L830,572 L895,585 L912,600 L905,620 L885,668 L857,668 L775,960 L752,985 L775,995 L775,1018 L735,1015 L660,1258 L632,1262 L655,1280 L650,1320 L622,1378 L650,1400 L648,1450 L628,1455 L595,1452 L480,1440 L470,1456 L335,1440 L330,1430 L235,1415 L218,1452 L205,1410 L228,1360 L150,1352 L145,1375 L130,1345 L145,1300 L168,1300 L310,1015 L315,978 L335,978 L515,620 L550,515 L545,480 L565,472 L640,275 L650,225 L680,192 Z" />
                <g class="hole">
                  <ellipse cx="725" cy="150" rx="9" ry="6" />
                  <ellipse cx="831" cy="154" rx="13" ry="10" />
                  <ellipse cx="882" cy="160" rx="13" ry="10" />
                  <ellipse cx="1000" cy="182" rx="9" ry="7" />
                  <ellipse cx="660" cy="503" rx="12" ry="9" />
                  <ellipse cx="645" cy="549" rx="11" ry="9" />
                  <ellipse cx="572" cy="994" rx="11" ry="9" />
                  <ellipse cx="842" cy="617" rx="35" ry="13" />
                  <path d="M715,605 L770,608 Q778,615 770,645 L705,645 Q695,640 715,605 Z" />
                  <path d="M590,617 L645,622 Q655,630 640,680 Q640,700 665,712 L745,722 Q755,730 740,775 L620,905 Q615,915 600,912 L475,895 Q465,885 475,870 L545,720 Q570,650 590,617 Z" />
                  <path d="M435,950 L558,965 L285,1275 Q270,1282 270,1268 L333,1145 L308,1128 L335,1050 L380,1048 L428,955 Z" />
                  <path d="M650,975 Q665,975 665,990 L580,1245 L400,1272 Q385,1265 400,1245 Z" />
                  <path d="M305,1345 L550,1310 L552,1325 L530,1380 L515,1385 L310,1360 Q298,1352 305,1345 Z" />
                </g>
                <g class="flange-dark">
                  <path d="M1040,155 L1062,190 L1060,225 L1040,245 L1034,215 Z" />
                  <path d="M544,480 L556,480 L552,520 L542,512 Z" />
                  <path d="M315,978 L328,980 L320,1015 L305,1012 Z" />
                  <path d="M756,985 L778,992 L775,1022 L750,1012 Z" />
                  <path d="M634,1265 L655,1280 L650,1320 L627,1325 L622,1300 Z" />
                  <path d="M622,1380 L650,1400 L648,1450 L628,1455 L616,1420 Z" />
                  <path d="M205,1410 L235,1415 L218,1452 Z" />
                  <path d="M145,1300 L153,1302 L150,1352 L145,1375 L130,1345 Z" />
                  <path d="M335,1430 L480,1440 L470,1456 L335,1440 Z" />
                  <path d="M895,585 L912,598 L906,615 L892,608 Z" />
                  <path d="M680,140 L690,130 L692,170 L682,185 Z" />
                </g>
                <rect x="636" y="262" width="16" height="18" fill="#c4c6c8" stroke="#666" vector-effect="non-scaling-stroke" />
                <g transform="translate(515 782)">
                  <path d="M-18,-4 L0,-14 L18,-8 L15,10 L-3,16 L-15,10 Z" fill="#1e7fbb" />
                  <path d="M-4,-2 L12,-5 L8,6 L-4,8 Z" fill="#8fd0f0" />
                </g>
                <path class="cube-top" d="M970,1335 L1155,1352 L1115,1490 L918,1468 Z" />
                <path class="cube-front" d="M918,1468 L1115,1490 L1132,1552 L960,1525 Z" />
                <path class="cube-right" d="M1155,1352 L1168,1425 L1132,1552 L1115,1490 Z" />
                <text class="cube-text" transform="translate(1062 1383) rotate(96) scale(1 1)">TOP</text>
                <text class="cube-text sm" transform="translate(1095 1523) rotate(186) scale(1 1.250)">RIGHT</text>
                <path d="M1050,1445 L1035,1505" stroke="#e8666a" stroke-width="5" />
                <path d="M1050,1445 L1145,1452" stroke="#8fe38f" stroke-width="5" />
                <path d="M1050,1445 L1035,1415" stroke="#a9a6ee" stroke-width="5" />
                <circle cx="1050" cy="1445" r="7" fill="#e4d65a" stroke="#777" />
              </svg>
            </div>
          </div>
        </div>

        <div class="dock">
          <svg class="dock-ic top"><use href="#d-feature" /></svg>
          <div v-if="w.id === 'a'" class="vtext">特徵庫</div>
          <div v-for="d in w.dock" :key="d.icon" class="dock-item">
            <svg class="dock-ic" :class="'ic-' + d.icon"><use :href="'#' + d.icon" /></svg>
            <svg v-if="d.cursor" class="cursor" viewBox="0 0 12 14"><path d="M1 1v10l3-2 2 4 2-1-2-4h4z" fill="#fff" stroke="#000" /></svg>
          </div>
          <div v-if="w.id === 'b'" class="vtext faint">創成式設計</div>
          <div v-for="d in dockTail" :key="d" class="dock-item">
            <svg class="dock-ic"><use :href="'#' + d" /></svg>
          </div>
        </div>
      </div>

      <!-- status bar -->
      <div class="status">
        <span class="status-text">選取了 0 項</span>
        <div class="status-icons">
          <svg v-for="s in statusIcons" :key="s" class="i18"><use :href="'#' + s" /></svg>
        </div>
        <div v-if="w.id === 'a'" class="zoomctl">
          <span class="zbtn">−</span>
          <div class="zline"><span class="zthumb"></span></div>
          <span class="zbtn plus">+</span>
          <svg class="grip" viewBox="0 0 14 14"><path d="M12 0h2v2h-2zM8 4h2v2H8zM12 4h2v2h-2zM4 8h2v2H4zM8 8h2v2H8zM12 8h2v2h-2zM0 12h2v2H0zM4 12h2v2H4zM8 12h2v2H8zM12 12h2v2h-2z" fill="#bcd" /></svg>
        </div>
      </div>
    </div>
  </div>
</template>

<script setup>
const tabs = ['首頁', '曲面處理', 'PM', '分析', '3D', '檢查', '工具', '增材製造', '視圖', '資料管理']

const qat = [
  'q-new', 'caret', 'q-open', 'q-pin', 'q-save', 'q-saveas', 'caret', 'q-gear', 'q-list', 'caret',
  'q-exit', 'q-undo', 'caret', 'q-redo', 'caret', 'q-redo2'
]

const orientIcons = ['s-zoomin', 's-cubeo', 's-sheet', 's-width', 's-rotdisc', 's-cubear', 's-rot', 's-refresh']

const viewCollapsed = [
  { label: '樣式', icon: 'r-style' },
  { label: '組態', icon: 'r-config' },
  { label: '視窗', icon: 'r-window' }
]

const homeCollapsed = [
  { label: '草圖', icon: 's-sketch' },
  { label: '鈑金', icon: 's-plate' },
  { label: '陣列', icon: 's-pattern' },
  { label: '修改', icon: 's-modify' },
  { label: '尺寸', icon: 's-dim' },
  { label: '方向', icon: 's-orient' },
  { label: '樣式', icon: 'r-style' }
]

const statusIcons = ['b-zoomarea', 'b-zoomin', 'b-fit', 'b-width', 'b-rot', 'b-back', 'b-orient', 'b-layers']
const dockTail = ['d-layers', 'd-hex']

const windows = [
  {
    id: 'a',
    title: '順序鈑...',
    activeTab: 8,
    doc: 'BSM-00175_Mirror.psm',
    dock: [
      { icon: 'd-asm' },
      { icon: 'd-tool', cursor: true },
      { icon: 'd-gauge' },
      { icon: 'd-grid' },
      { icon: 'd-rainbow' },
      { icon: 'd-key' }
    ]
  },
  {
    id: 'b',
    title: '順序...',
    activeTab: 0,
    doc: 'BSM-00175.psm',
    dock: [
      { icon: 'd-asm' },
      { icon: 'd-tool' },
      { icon: 'd-gauge' },
      { icon: 'd-grid' },
      { icon: 'd-rainbow' },
      { icon: 'd-key' }
    ]
  }
]

const features = [
  ['t-plate', '平板 1', 1], ['t-flange', '凸緣 18', 1], ['t-round', '倒角 17'], ['t-round', '倒角 30'], ['t-round', '倒角 31'],
  ['t-flange', '凸緣 19', 1], ['t-flange', '凸緣 24', 1], ['t-round', '倒角 18'], ['t-round', '倒角 19'], ['t-flange', '凸緣 20', 1],
  ['t-round', '倒角 20'], ['t-flange', '凸緣 1', 1], ['t-cut', '法向除料 7', 1], ['t-flange', '凸緣 2', 1], ['t-cut', '法向除料 8', 1],
  ['t-flange', '凸緣 6', 1], ['t-hole', '孔 16'], ['t-hole', '孔 18'], ['t-hole', '孔 21'], ['t-flange', '凸緣 15', 1],
  ['t-hole', '孔 17'], ['t-cut', '法向除料 13', 1]
]

function treeRows(w) {
  return [
    { lv: 0, tw: 'down', s: true, label: w.doc },
    { lv: 1, tw: 'down', hl: true, icon: 't-design', label: '設計' },
    { lv: 2, eye: 't-eyeoff', icon: 't-base', label: 'Base', gray: true },
    { lv: 2, icon: 't-mat', label: '材質 (Steel)' },
    { lv: 2, tw: 'right', eye: 't-eye', icon: 't-refplane', label: '基本參照平面' },
    { lv: 2, tw: 'right', eye: 't-eye', icon: 't-body', label: '設計體' },
    { lv: 2, tw: 'down', hl: true, label: '順序建模' },
    ...features.map(([icon, label, kids]) => ({ lv: 3, tw: kids ? 'right' : '', icon, label }))
  ]
}
</script>

<style>
html, body { margin: 0; background: #15222b; }
</style>

<style scoped>
.app {
  display: flex;
  width: 1648px;
  height: 1027px;
  overflow: hidden;
  background: #15222b;
  font-family: "Noto Sans", "Noto Sans CJK TC", sans-serif;
  color: #1a1a1a;
}
.sprite { position: absolute; width: 0; height: 0; overflow: hidden; }
.serif { font-family: "Liberation Serif", "Noto Sans CJK TC", serif; }

.win { display: flex; flex-direction: column; background: #fff; flex: none; }
.win-a { width: 837px; height: 1027px; margin-left: 1px; }
.win-b { width: 807px; height: 1024px; margin: 1px 0 0 2px; }

/* title bar + tabs */
.titlebar, .tabbar {
  display: flex;
  align-items: center;
  background: linear-gradient(90deg, #00638a 0%, #00638a 58%, #5b9bb7 100%);
  color: #eaf3f6;
  flex: none;
}
.titlebar { height: 38px; padding-left: 9px; }
.win-b .titlebar { padding-left: 8px; height: 39px; }
.se-logo {
  width: 29px;
  height: 29px;
  border: 1px solid #e8eef2;
  background: #2f4aa8;
  color: #fff;
  font: bold 15px/29px "Open Sans", sans-serif;
  text-align: center;
  flex: none;
  margin-top: 2px;
}
.qat { display: flex; align-items: center; gap: 11.6px; margin-left: 35px; }
.win-b .qat { margin-left: 33px; gap: 11.500px; }
.i15 { width: 15px; height: 15px; flex: none; }
.qcaret { width: 0; height: 0; border: 3px solid transparent; border-top: 4px solid #e6eef2; border-bottom: 0; flex: none; }
.qdrop { width: 11px; height: 11px; }
.app-title { margin-left: 10px; font-size: 15.500px; white-space: nowrap; width: 178px; padding-bottom: 3px; }
.win-b .app-title { margin-left: 5px; width: 162px; }
.siemens { font: bold 11.500px "Open Sans", sans-serif; color: #e8f1f5; margin-left: 12px; transform: scaleX(.92); transform-origin: left; }
.win-b .siemens { margin-left: 8px; }
.winbtns { display: flex; align-items: center; margin-left: auto; }
.wb-min { width: 11px; height: 3px; background: #c5d7df; margin: 9px 27px 0 0; }
.wb-max { width: 12px; height: 11px; border: 1px solid #d5e3e9; border-top-width: 3px; margin-right: 26px; }
.wb-close { width: 14px; height: 14px; margin-right: 13px; }

.tabbar { height: 30px; }
.file-tab { font: 15.500px "Liberation Serif", "Noto Sans CJK TC", serif; margin-left: 13px; width: 69px; margin-bottom: 6px; flex: none; }
.win-b .file-tab { margin-left: 11px; width: 75px; }
.tabs { display: flex; width: 382px; flex: none; }
.tab { width: 32.700px; height: 30px; flex: none; display: flex; align-items: center; justify-content: center; position: relative; font: 15px "Liberation Serif", "Noto Sans CJK TC", serif; }
.tab span { display: block; width: 22px; overflow: hidden; white-space: nowrap; text-align: left; }
.tab.active::after { content: ""; position: absolute; left: 2px; right: 1px; bottom: 2px; height: 1px; background: #ead97a; }
.win-a .tab:nth-child(3) span, .win-a .tab:nth-child(5) span,
.win-b .tab:nth-child(3) span, .win-b .tab:nth-child(5) span { width: auto; }
.win-b .tabs { width: 351px; margin-left: 2px; }
.win-b .tab { width: 29.900px; }
.win-b .tab span { width: 20px; }
.search {
  width: 165px;
  height: 27px;
  background: #fff;
  color: #111;
  display: flex;
  align-items: center;
  padding: 0 0 2px 5px;
  box-sizing: border-box;
  font-size: 15px;
  margin-top: 3px;
  position: relative;
  border-bottom: 1px solid #bfbfbf;
  flex: none;
}
.search-ic { width: 16px; height: 16px; margin-left: auto; margin-right: 5px; }
.tabicons { display: flex; align-items: center; margin-left: 65px; }
.win-b .tabicons { margin-left: 62px; }
.face { width: 16px; height: 16px; margin-right: 13px; }
.help { width: 15px; height: 15px; border-radius: 50%; background: #e8f0f4; color: #1c6d8f; font: bold 12px/15px "Open Sans", sans-serif; text-align: center; }
.mini-min { width: 6px; height: 2px; background: #fff; margin: 5px 0 0 13px; }
.mini-rest { width: 12px; height: 12px; margin-left: 11px; }
.mini-x { width: 12px; height: 12px; margin-left: 10px; }
.win-b .mini-min { margin-left: 8px; }
.win-b .mini-rest { margin-left: 15px; }

/* ribbon */
.ribbon { display: flex; height: 117px; box-sizing: border-box; border-bottom: 2px solid #b8b8b8; flex: none; background: #fff; }
.win-b .ribbon { height: 116px; }
.rg {
  height: 99px;
  margin-top: 8px;
  border-right: 1px solid #e6e6e6;
  box-sizing: border-box;
  display: flex;
  flex-direction: column;
  font-size: 14.700px;
  flex: none;
}
.rg-body { height: 79px; display: flex; flex: none; }
.rg-body.column { flex-direction: column; }
.rg-label { height: 20px; line-height: 20px; text-align: center; padding-left: 3px; white-space: nowrap; }
.rg-label.low { line-height: 24px; }
.g-show { width: 99px; }
.g-sect { width: 103px; }
.g-view { width: 147px; }
.g-orient { width: 221px; }
.g-col { width: 56px; }
.g-clip { width: 113px; }
.g-select { width: 110px; }
.g-plane { width: 54px; }
.g-show .rg-body { padding-left: 13px; }
.g-sect .rg-body { padding: 1px 0 0 13px; }
.g-view .rg-body { padding-left: 9px; }
.g-orient .rg-body { padding-left: 12px; }
.g-clip .rg-body { padding-left: 12px; }
.g-select .rg-body { padding-left: 9px; }
.g-plane .rg-body { padding-left: 15px; }

.big { display: flex; flex-direction: column; align-items: center; padding-top: 3px; flex: none; }
.w50 { width: 50px; }
.w55 { width: 55px; }
.w60 { width: 60px; }
.w66 { width: 66px; }
.pane-ic { width: 26px; height: 30px; flex: none; }
.big-label { margin-top: 21px; height: 20px; line-height: 20px; white-space: nowrap; flex: none; }
.caret { width: 0; height: 0; border: 3.500px solid transparent; border-top: 4px solid #111; border-bottom: 0; margin-top: 3px; flex: none; }
.caret.inline { margin: 0 0 0 12px; }
.caret.near { margin-left: 4px; }
.off { color: #a9a9a9; }
.sect-ic { margin: 6px 0 0 9px; }
.i16 { width: 16px; height: 16px; flex: none; }
.i17 { width: 17px; height: 17px; flex: none; }
.i18 { width: 18px; height: 18px; flex: none; }
.i20 { width: 20px; height: 20px; flex: none; }
.i30 { width: 30px; height: 30px; flex: none; }
.textrow { display: flex; align-items: center; height: 21px; white-space: nowrap; }
.textrow + .textrow { margin-top: 1px; }
.smallgrid { display: grid; grid-template-columns: repeat(3, 29.300px); grid-auto-rows: 29.500px; place-items: center; margin-top: -3px; height: 88px; }
.smcol { display: flex; flex-direction: column; margin-top: -2px; }
.smrow { height: 29.500px; display: flex; align-items: center; }
.clip-col { margin-left: 8px; }

.sel-big {
  width: 53px;
  height: 86px;
  background: #c9e0ea;
  display: flex;
  flex-direction: column;
  align-items: center;
  flex: none;
  position: relative;
  z-index: 1;
}
.sel-arrow { width: 20px; height: 27px; margin-top: 5px; flex: none; }
.sel-big .big-label { margin-top: 22px; }
.sel-big .caret { margin-top: 2px; }
.sel-col { display: flex; flex-direction: column; width: 43px; flex: none; position: relative; z-index: 1; }
.sel-row { height: 28.500px; background: #c9e0ea; display: flex; align-items: center; padding-left: 5px; border-top: 1px solid #dbe9ef; box-sizing: border-box; flex: none; }
.sel-row.plain { background: none; border: 0; }
.plane-col { margin-top: -1px; }

.cb { display: flex; flex-direction: column; align-items: center; padding-top: 6px; }
.cb-label { margin-top: 30px; height: 20px; line-height: 20px; }
.cb .caret { margin-top: 7px; }

/* work area */
.work { flex: 1; display: flex; min-height: 0; }
.col { flex: 1; display: flex; flex-direction: column; min-width: 0; }
.prompt { display: flex; height: 28px; flex: none; align-items: stretch; margin-right: 3px; }
.prompt-ic { width: 44px; background: #00638a; display: flex; align-items: center; justify-content: center; flex: none; }
.card { width: 24px; height: 14px; }
.prompt-text { flex: 1; font-size: 16.900px; line-height: 28px; padding-left: 3px; white-space: nowrap; color: #111; }
.prompt-scroll { width: 20px; background: #f0f0f0; display: flex; flex-direction: column; align-items: center; justify-content: center; flex: none; }
.chev { width: 12px; height: 12px; display: block; }
.strip { height: 6px; flex: none; box-sizing: border-box; border-top: 2px solid #fff; border-bottom: 1px solid #fff; background: #d2d2d2; }
.docrow { height: 31px; flex: none; display: flex; border-bottom: 1px solid #00638a; box-sizing: border-box; }
.doctab { background: #00638a; color: #f2f7f9; margin-left: 3px; display: flex; align-items: center; font-size: 15.200px; white-space: nowrap; flex: none; width: 254px; }
.win-b .doctab { width: 201px; margin-left: 2px; }
.doc-ic { width: 14px; height: 16px; margin: 0 5px 0 20px; flex: none; }
.doc-x { width: 12px; height: 12px; margin-left: auto; margin-right: 6px; }
.docctl { margin-left: auto; display: flex; align-items: center; gap: 6px; padding-right: 5px; }
.docctl svg { width: 11px; height: 14px; }
.docctl .big-x { width: 14px; height: 16px; margin-left: 3px; }

.main { flex: 1; display: flex; min-height: 0; }
.nav { width: 313px; flex: none; display: flex; flex-direction: column; box-sizing: border-box; border: 1px solid #00638a; border-top: 0; margin-left: 1px; }
.win-b .nav { width: 310px; margin-left: 3px; }
.nav-head { height: 26px; flex: none; background: #00638a; color: #eaf3f6; display: flex; align-items: center; margin: 0 -1px; font-size: 15.500px; }
.nav-ic { width: 21px; height: 22px; margin-left: 7px; flex: none; }
.nav-title { margin-left: 8px; letter-spacing: .5px; }
.nav-drop { width: 13px; height: 13px; margin-left: auto; }
.nav-x { width: 11px; height: 11px; margin: 0 11px 0 8px; }
.nav-mid { flex: 1; display: flex; min-height: 0; }
.tree { flex: 1; overflow: hidden; padding-top: 4px; min-width: 0; font-family: Roboto, "Noto Sans CJK TC", sans-serif; }
.win-b .tree { margin-left: -2px; padding-top: 5px; }
.row { display: flex; align-items: center; height: 24px; font-size: 15.700px; white-space: nowrap; }
.tw { width: 12px; height: 12px; flex: none; position: relative; }
.tw.down::after { content: ""; position: absolute; left: 1px; top: 3px; border: 5px solid transparent; border-top: 6px solid #444; border-bottom: 0; }
.tw.right::after { content: ""; position: absolute; left: 3px; top: 1px; border: 5px solid transparent; border-left: 6px solid #444; border-right: 0; }
.lv0 .tw { margin-left: 9px; }
.lv1 .tw { margin-left: 26px; }
.lv2 .tw { margin-left: 53px; }
.lv3 .tw { margin-left: 77px; }
.ms { margin-left: 6px; }
.hl { display: flex; align-items: center; height: 18px; background: #fdd28a; flex: none; overflow: hidden; }
.lv1 .hl { margin-left: 9px; width: 228px; }
.lv1 .hl .lab { margin-left: 10px; }
.lv2 .hl { margin-left: 11px; width: 211px; padding-left: 5px; box-sizing: border-box; }
.hl-check { width: 18px; height: 14px; margin-left: auto; margin-right: 4px; flex: none; }
.lv2 .hl-check { margin-right: -9px; }
.eye { width: 16px; height: 11px; margin-left: 11px; flex: none; display: block; }
.ticon { width: 18px; height: 18px; margin-left: 7px; flex: none; }
.lv3 .ticon { width: 20px; height: 20px; margin-left: 33px; }
.row .lab { margin-left: 9px; }
.lv3 .lab { margin-left: 8px; }
.row .hl .lab:first-child { margin-left: 0; }
.lab.gray { color: #8c8c8c; }
.vscroll { width: 19px; margin: 5px 4px 0 0; display: flex; flex-direction: column; flex: none; background: #f0f0f0; }
.sb-btn { height: 21px; display: flex; align-items: center; justify-content: center; flex: none; }
.sb-thumb { height: 357px; background: #cdcdcd; flex: none; }
.win-b .sb-thumb { height: 349px; }
.sb-rest { flex: 1; display: flex; align-items: flex-end; justify-content: center; padding-bottom: 6px; }
.hscroll { height: 19px; margin: 0 4px 3px 3px; background: #f0f0f0; display: flex; flex: none; }
.hbtn { width: 21px; display: flex; align-items: center; justify-content: center; flex: none; }
.hbtn.end { margin-left: 15px; }
.win-b .hbtn.end { margin-left: 11px; }
.h-thumb { width: 227px; background: #cdcdcd; flex: none; }

.viewport { flex: 1; position: relative; background: #fcfcfc; overflow: hidden; }
.scene { position: absolute; left: 65px; top: 99px; width: 460px; height: 650px; overflow: visible; }
.win-b .scene { left: 27px; top: 70px; width: 468px; }
.part-a { fill: #818286; stroke: #66676b; stroke-width: 1; vector-effect: non-scaling-stroke; }
.part-b { fill: #97999c; stroke: #55565a; stroke-width: 1; vector-effect: non-scaling-stroke; }
.hole > * { fill: #fcfcfc; stroke: #55565a; stroke-width: 1; vector-effect: non-scaling-stroke; }
.flange-dark path { fill: #56575b; }
.bslot { fill: #e8e8e8; }
.wire path { fill: none; stroke: #666; stroke-width: 1; vector-effect: non-scaling-stroke; }
.cube-top { fill: #fff; stroke: #aaa; vector-effect: non-scaling-stroke; }
.cube-front { fill: #e8e8e8; stroke: #aaa; vector-effect: non-scaling-stroke; }
.cube-right { fill: #f1f1f1; stroke: #aaa; vector-effect: non-scaling-stroke; }
.cube-dots { stroke: #777; stroke-width: 2; stroke-dasharray: 3 22; fill: none; }
.cube-text { font-family: "Liberation Serif", serif; font-size: 40px; fill: #777; }
.cube-text.sm { font-size: 26px; fill: #666; }

.dock { width: 38px; flex: none; display: flex; flex-direction: column; align-items: center; padding: 13px 1px 0 0; box-sizing: border-box; background: #fdfdfd; }
.win-b .dock { width: 35px; padding: 12px 0 0 0; }
.dock-ic { width: 25px; height: 25px; flex: none; display: block; }
.dock-ic.top { height: 24px; }
.dock-item { height: 43px; flex: none; display: flex; align-items: center; position: relative; }
.vtext { writing-mode: vertical-rl; text-orientation: sideways; font-size: 15px; line-height: 18px; height: 46px; margin-bottom: 38px; flex: none; color: #111; }
.win-b .dock-ic.top { margin-bottom: 8px; }
.win-b .vtext { height: 74px; margin: -6px 0 7px; font-size: 14.500px; color: #cdcdcd; }
.cursor { position: absolute; right: -6px; top: 15px; width: 12px; height: 14px; }

/* status bar */
.status { height: 23px; flex: none; background: #00638a; color: #e6f0f4; display: flex; align-items: center; font-size: 15px; }
.win-b .status { height: 27px; }
.status-text { margin-left: 152px; width: 80px; white-space: nowrap; }
.win-b .status-text { margin-left: 151px; }
.status-icons { display: flex; gap: 10px; margin-left: 153px; }
.zoomctl { display: flex; align-items: center; margin-left: 10px; flex: 1; }
.zbtn { width: 18px; height: 18px; border-radius: 50%; background: #f4f4f4; color: #d9731f; font: bold 16px/17px "Open Sans", sans-serif; text-align: center; flex: none; }
.zline { width: 142px; height: 1px; background: #fff; margin: 0 5px; position: relative; }
.zthumb { position: absolute; left: 58px; top: -7px; width: 7px; height: 14px; background: #eee; border: 1px solid #ccc; box-sizing: border-box; }
.grip { width: 14px; height: 14px; margin-left: auto; margin-right: 2px; align-self: flex-end; }
</style>
